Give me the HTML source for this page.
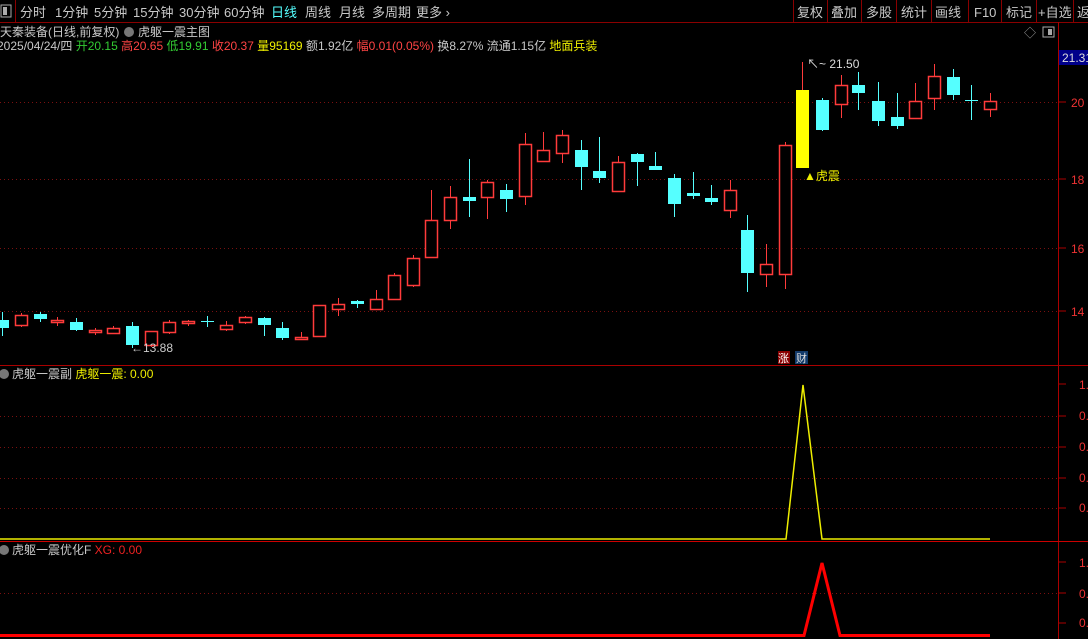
<!DOCTYPE html>
<html><head><meta charset="utf-8"><style>
body{margin:0;background:#000;width:1088px;height:639px;overflow:hidden;font-family:"Liberation Sans","Noto Sans CJK SC",sans-serif;}
svg{display:block}
</style></head><body>
<svg id="s" width="1088" height="639" xmlns="http://www.w3.org/2000/svg" font-family="Liberation Sans, Noto Sans CJK SC, sans-serif">
<rect width="1088" height="639" fill="#000"/>
<line x1="0" y1="22.5" x2="1088" y2="22.5" stroke="#8a0000"/>
<rect x="1" y="5" width="10" height="12" fill="none" stroke="#aaa"/><rect x="3" y="7" width="4" height="8" fill="#aaa"/>
<line x1="15.5" y1="0" x2="15.5" y2="22" stroke="#8a0000"/>
<g font-size="13" fill="#c8c8c8">
<text x="20" y="17">分时</text><text x="55" y="17">1分钟</text><text x="94" y="17">5分钟</text><text x="133" y="17">15分钟</text><text x="179" y="17">30分钟</text><text x="224" y="17">60分钟</text>
<text x="271" y="17" fill="#5ff">日线</text><text x="305" y="17">周线</text><text x="339" y="17">月线</text><text x="372" y="17">多周期</text><text x="416" y="17">更多 ›</text>
<text x="797" y="17">复权</text><text x="831" y="17">叠加</text><text x="866" y="17">多股</text><text x="901" y="17">统计</text><text x="935" y="17">画线</text><text x="974" y="17">F10</text><text x="1006" y="17">标记</text><text x="1038" y="17">+自选</text><text x="1077" y="17">返</text>
</g>
<g stroke="#8a0000"><line x1="793.5" y1="0" x2="793.5" y2="22"/><line x1="827.5" y1="0" x2="827.5" y2="22"/><line x1="861.5" y1="0" x2="861.5" y2="22"/><line x1="896.5" y1="0" x2="896.5" y2="22"/><line x1="931.5" y1="0" x2="931.5" y2="22"/><line x1="968.5" y1="0" x2="968.5" y2="22"/><line x1="1001.5" y1="0" x2="1001.5" y2="22"/><line x1="1036.5" y1="0" x2="1036.5" y2="22"/><line x1="1073.5" y1="0" x2="1073.5" y2="22"/></g>
<g font-size="12">
<text x="0" y="36" fill="#c8c8c8">天秦装备(日线,前复权)</text>
<circle cx="129" cy="32" r="5" fill="#777"/>
<text x="138" y="36" fill="#c8c8c8">虎躯一震主图</text>
<text x="-3" y="50" fill="#c8c8c8">2025/04/24/四 <tspan fill="#3c3">开20.15</tspan> <tspan fill="#f44">高20.65</tspan> <tspan fill="#3c3">低19.91</tspan> <tspan fill="#f44">收20.37</tspan> <tspan fill="#ee0">量95169</tspan> 额1.92亿 <tspan fill="#f44">幅0.01(0.05%)</tspan> 换8.27% 流通1.15亿 <tspan fill="#ee0">地面兵装</tspan></text>
</g>
<text x="1024" y="37" font-size="12" fill="#999">◇</text>
<rect x="1043" y="27" width="11" height="10" fill="none" stroke="#aaa"/><rect x="1048" y="29" width="4" height="6" fill="#aaa"/>
<line x1="1058.5" y1="22" x2="1058.5" y2="639" stroke="#a00"/>
<g stroke="#7a1010" stroke-dasharray="1,3">
<line x1="0" y1="102.5" x2="1058" y2="102.5"/><line x1="0" y1="179.5" x2="1058" y2="179.5"/><line x1="0" y1="248.5" x2="1058" y2="248.5"/><line x1="0" y1="311.5" x2="1058" y2="311.5"/>
<line x1="0" y1="416.5" x2="1058" y2="416.5"/><line x1="0" y1="447.5" x2="1058" y2="447.5"/><line x1="0" y1="478.5" x2="1058" y2="478.5"/><line x1="0" y1="508.5" x2="1058" y2="508.5"/>
<line x1="0" y1="593.5" x2="1058" y2="593.5"/>
</g>
<line x1="0" y1="365.5" x2="1088" y2="365.5" stroke="#a00"/>
<line x1="0" y1="541.5" x2="1088" y2="541.5" stroke="#c00"/>
<rect x="1059" y="50" width="29" height="15" fill="#00008a"/>
<g font-size="12" fill="#e33">
<text x="1062" y="62" fill="#ddd">21.31</text>
<text x="1071" y="107">20</text><text x="1071" y="184">18</text><text x="1071" y="253">16</text><text x="1071" y="316">14</text>
<text x="1079" y="389">1.</text><text x="1079" y="420">0.</text><text x="1079" y="451">0.</text><text x="1079" y="482">0.</text><text x="1079" y="512">0.</text>
<text x="1079" y="567">1.</text><text x="1079" y="598">0.</text><text x="1079" y="627">0.</text>
</g>
<g id="c"></g>
<text x="807" y="68" font-size="12" fill="#ddd">↖~ 21.50</text>
<text x="131" y="352" font-size="12" fill="#ccc">←13.88</text>
<text x="804" y="180" font-size="12" fill="#ee0">▲虎震</text>
<rect x="778" y="351" width="12" height="13" fill="#8a0000"/><text x="778" y="362" font-size="11" fill="#fff">涨</text>
<rect x="795" y="351" width="13" height="13" fill="#123a6a"/><text x="796" y="362" font-size="11" fill="#ddd">财</text>
<circle cx="4" cy="374" r="5" fill="#777"/>
<text x="12" y="378" font-size="12" fill="#c8c8c8">虎躯一震副 <tspan fill="#ee0">虎躯一震: 0.00</tspan></text>
<polyline points="0,539 786,539 803,385 822,539 990,539" fill="none" stroke="#ee0" stroke-width="1.5"/>
<circle cx="4" cy="550" r="5" fill="#777"/>
<text x="12" y="554" font-size="12" fill="#c8c8c8">虎躯一震优化F <tspan fill="#e22">XG: 0.00</tspan></text>
<polyline points="0,635.5 804,635.5 822,563 840,635.5 990,635.5" fill="none" stroke="#f00" stroke-width="3"/>
<g stroke="#a00"><line x1="1059" y1="384" x2="1066" y2="384"/><line x1="1059" y1="416" x2="1066" y2="416"/><line x1="1059" y1="447" x2="1066" y2="447"/><line x1="1059" y1="478" x2="1066" y2="478"/><line x1="1059" y1="508" x2="1066" y2="508"/><line x1="1059" y1="562" x2="1066" y2="562"/><line x1="1059" y1="593" x2="1066" y2="593"/><line x1="1059" y1="623" x2="1066" y2="623"/>
<line x1="1059" y1="102" x2="1066" y2="102"/><line x1="1059" y1="179" x2="1066" y2="179"/><line x1="1059" y1="248" x2="1066" y2="248"/><line x1="1059" y1="311" x2="1066" y2="311"/></g>
</svg>
<script>
var d=[
[2,'c',320,328,312,336],[21,'r',315,325,313,327],[40,'c',314,319,312,322],[57,'r',320,322,317,326],[76,'c',322,330,318,331],
[95,'r',330,332,328,335],[113,'r',328,333,326,334],[132,'c',326,345,322,348],[151,'r',331,345,331,347],[169,'r',322,332,320,334],
[188,'r',321,323,320,326],[207,'x',321,322,316,327],[226,'r',325,329,321,331],[245,'r',317,322,316,324],[264,'c',318,325,317,336],
[282,'c',328,338,322,340],[301,'r',337,339,332,340],[319,'r',305,336,305,336],[338,'r',304,309,298,316],[357,'c',301,304,300,308],
[376,'r',299,309,290,310],[394,'r',275,299,273,300],[413,'r',258,285,255,287],[431,'r',220,257,190,258],[450,'r',197,220,186,229],
[469,'c',197,201,159,217],[487,'r',182,197,180,219],[506,'c',190,199,184,212],[525,'r',144,196,133,205],[543,'r',150,161,132,161],
[562,'r',135,153,130,163],[581,'c',150,167,140,190],[599,'c',171,178,137,183],[618,'r',162,191,156,191],[637,'c',154,162,153,186],
[655,'c',166,170,152,170],[674,'c',178,204,174,217],[693,'c',193,196,172,199],[711,'c',198,202,185,205],[730,'r',190,210,180,218],
[747,'c',230,273,215,292],[766,'r',264,274,244,287],[785,'r',145,274,142,289],[802,'y',90,168,62,168],[822,'c',100,130,98,131],
[841,'r',85,104,75,118],[858,'c',85,93,72,110],[878,'c',101,121,82,126],[897,'c',117,126,93,129],[915,'r',101,118,83,118],
[934,'r',76,98,64,110],[953,'c',77,95,69,100],[971,'x',100,101,85,120],[990,'r',101,109,93,117]];
var h='';
d.forEach(function(a){var x=a[0],t=a[1],o=a[2],c=a[3],hi=a[4],lo=a[5];
var col=t=='r'?'#ff3b3b':t=='y'?'#ffff00':'#5ff';
var wc=t=='y'?'#ff3b3b':col;
h+='<line x1="'+(x+.5)+'" y1="'+hi+'" x2="'+(x+.5)+'" y2="'+lo+'" stroke="'+wc+'"/>';
if(t=='x'){h+='<line x1="'+(x-6)+'" y1="'+(o+.5)+'" x2="'+(x+7)+'" y2="'+(o+.5)+'" stroke="'+col+'"/>';}
else if(t=='r'){h+='<rect x="'+(x-5.5)+'" y="'+(o+.5)+'" width="12" height="'+Math.max(c-o,2)+'" fill="#000" stroke="'+col+'" stroke-width="1.5"/>';}
else{h+='<rect x="'+(x-6)+'" y="'+o+'" width="13" height="'+Math.max(c-o,2)+'" fill="'+col+'"/>';}
});
document.getElementById('c').innerHTML=h;
</script>
</body></html>
